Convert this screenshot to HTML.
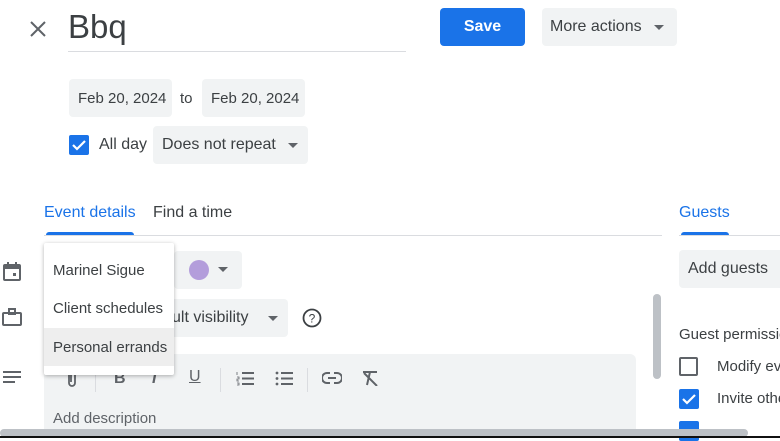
<!DOCTYPE html>
<html><head><style>
*{margin:0;padding:0;box-sizing:border-box}
body{width:780px;height:438px;overflow:hidden;background:#fff;font-family:"Liberation Sans",Arial,sans-serif;color:#3c4043;position:relative}
.a{position:absolute;white-space:nowrap}
.chip{position:absolute;background:#f1f3f4;border-radius:4px;font-size:15px;color:#3c4043;display:flex;align-items:center;white-space:nowrap;overflow:hidden}
.tri{width:0;height:0;border-left:5px solid transparent;border-right:5px solid transparent;border-top:5px solid #5f6368;position:absolute}
.cb{position:absolute;width:20px;height:20px;border-radius:2px;background:#1a73e8}
</style></head><body>
<svg class="a" style="left:29px;top:20px" width="18" height="18" viewBox="0 0 18 18"><path d="M2 2L16 16M16 2L2 16" stroke="#5f6368" stroke-width="2"/></svg>
<div class="a" style="left:68px;top:8px;font-size:33px;color:#3c4043">Bbq</div>
<div class="a" style="left:68px;top:51px;width:338px;height:1px;background:#dadce0"></div>
<div class="a" style="left:440px;top:8px;width:85px;height:38px;background:#1a73e8;border-radius:4px;color:#fff;font-size:16px;font-weight:bold;text-align:center;line-height:38px">Save</div>
<div class="chip" style="left:542px;top:8px;width:135px;height:38px;padding-left:8px;font-size:16px">More actions</div>
<div class="tri" style="left:654px;top:25px"></div>
<div class="chip" style="left:69px;top:79px;width:103px;height:38px;padding-left:9px">Feb 20, 2024</div>
<div class="a" style="left:180px;top:90px;font-size:15px">to</div>
<div class="chip" style="left:202px;top:79px;width:103px;height:38px;padding-left:9px">Feb 20, 2024</div>
<div class="cb" style="left:69px;top:135px"><svg width="20" height="20"><path d="M4 10l4 4 8-8" stroke="#fff" stroke-width="2.2" fill="none"/></svg></div>
<div class="a" style="left:99px;top:136px;font-size:16px">All day</div>
<div class="chip" style="left:153px;top:126px;width:155px;height:38px;padding-left:9px;font-size:16px">Does not repeat</div>
<div class="tri" style="left:288px;top:143px"></div>
<div class="a" style="left:44px;top:204px;font-size:16px;color:#1a73e8">Event details</div>
<div class="a" style="left:153px;top:204px;font-size:16px">Find a time</div>
<div class="a" style="left:46px;top:232px;width:88px;height:3px;background:#1a73e8;border-radius:3px 3px 0 0"></div>
<div class="a" style="left:44px;top:235px;width:618px;height:1px;background:#dadce0"></div>
<div class="a" style="left:679px;top:204px;font-size:16px;color:#1a73e8">Guests</div>
<div class="a" style="left:681px;top:232px;width:48px;height:3px;background:#1a73e8;border-radius:3px 3px 0 0"></div>
<div class="a" style="left:679px;top:235px;width:101px;height:1px;background:#dadce0"></div>
<div class="chip" style="left:679px;top:250px;width:110px;height:38px;padding-left:9px;font-size:16px">Add guests</div>
<div class="a" style="left:679px;top:326px;font-size:15px">Guest permissions</div>
<div class="a" style="left:679px;top:357px;width:19px;height:19px;border:2px solid #5f6368;border-radius:2px"></div>
<div class="a" style="left:717px;top:358px;font-size:15px">Modify event</div>
<div class="cb" style="left:679px;top:389px"><svg width="20" height="20"><path d="M4 10l4 4 8-8" stroke="#fff" stroke-width="2.2" fill="none"/></svg></div>
<div class="a" style="left:717px;top:390px;font-size:15px">Invite others</div>
<div class="cb" style="left:679px;top:421px"></div>
<div class="a" style="left:653px;top:294px;width:8px;height:85px;background:#bdc1c6;border-radius:4px"></div>
<svg class="a" style="left:3px;top:262px" width="18" height="19" viewBox="0 0 18 19"><rect x="1" y="3" width="16" height="15" rx="1" fill="none" stroke="#5f6368" stroke-width="2"/><rect x="1" y="3" width="16" height="4" fill="#5f6368"/><rect x="4" y="0" width="2" height="4" fill="#5f6368"/><rect x="12" y="0" width="2" height="4" fill="#5f6368"/><rect x="10" y="11" width="3" height="3" fill="#5f6368"/></svg>
<svg class="a" style="left:2px;top:308px" width="20" height="18" viewBox="0 0 20 18"><rect x="1" y="5" width="18" height="12" rx="1" fill="none" stroke="#5f6368" stroke-width="2"/><rect x="7" y="1" width="6" height="5" fill="none" stroke="#5f6368" stroke-width="2"/></svg>
<svg class="a" style="left:3px;top:371px" width="18" height="14"><path d="M0 1h18M0 6h18M0 11h12" stroke="#5f6368" stroke-width="2"/></svg>
<div class="chip" style="left:174px;top:251px;width:68px;height:38px"></div>
<div class="a" style="left:189px;top:260px;width:20px;height:20px;border-radius:50%;background:#b39ddb"></div>
<div class="tri" style="left:218px;top:267px"></div>
<div class="chip" style="left:150px;top:299px;width:138px;height:38px;padding-left:22px;font-size:16px">ult visibility</div>
<div class="tri" style="left:268px;top:316px"></div>
<svg class="a" style="left:302px;top:308px" width="20" height="20"><circle cx="10" cy="10" r="8.5" fill="none" stroke="#3c4043" stroke-width="1.8"/><text x="10" y="14.5" font-size="12" text-anchor="middle" fill="#3c4043" font-family="Liberation Sans">?</text></svg>
<div class="a" style="left:44px;top:354px;width:592px;height:84px;background:#f1f3f4;border-radius:6px 6px 0 0"></div>
<svg class="a" style="left:66px;top:369px" width="12" height="20"><path d="M3 5v9a3 3 0 0 0 6 0V4a2 2 0 0 0-4 0v9" stroke="#5f6368" stroke-width="1.8" fill="none"/></svg>
<div class="a" style="left:114px;top:370px;font-size:16px;font-weight:bold;color:#5f6368">B</div>
<div class="a" style="left:152px;top:370px;font-size:16px;font-weight:bold;font-style:italic;color:#5f6368">I</div>
<div class="a" style="left:95px;top:368px;width:1px;height:24px;background:#dadce0"></div>
<div class="a" style="left:220px;top:368px;width:1px;height:24px;background:#dadce0"></div>
<div class="a" style="left:307px;top:368px;width:1px;height:24px;background:#dadce0"></div>
<div class="a" style="left:189px;top:368px;font-size:16px;color:#5f6368;text-decoration:underline">U</div>
<svg class="a" style="left:236px;top:371px" width="18" height="15"><path d="M6 2h12M6 7.5h12M6 13h12" stroke="#5f6368" stroke-width="2"/><path d="M1 1v3M1 6h2v2H1v2h2M1 12h2v2H1" stroke="#5f6368" stroke-width="0.8" fill="none"/></svg>
<svg class="a" style="left:275px;top:371px" width="18" height="15"><path d="M6 2h12M6 7.5h12M6 13h12" stroke="#5f6368" stroke-width="2"/><circle cx="2" cy="2" r="1.4" fill="#5f6368"/><circle cx="2" cy="7.5" r="1.4" fill="#5f6368"/><circle cx="2" cy="13" r="1.4" fill="#5f6368"/></svg>
<svg class="a" style="left:322px;top:372px" width="20" height="12"><path d="M8 1H5a5 5 0 0 0 0 10h3M12 1h3a5 5 0 0 1 0 10h-3M6 6h8" stroke="#5f6368" stroke-width="2" fill="none"/></svg>
<svg class="a" style="left:361px;top:370px" width="18" height="16"><path d="M2 2h14M9 2L6 15M3 3l13 13" stroke="#5f6368" stroke-width="2" fill="none"/></svg>
<div class="a" style="left:53px;top:410px;font-size:15px;color:#5f6368">Add description</div>
<div class="a" style="left:44px;top:243px;width:130px;height:132px;background:#fff;box-shadow:0 1px 4px rgba(0,0,0,.3);border-radius:2px"></div>
<div class="a" style="left:44px;top:328px;width:130px;height:38px;background:#eeeeee"></div>
<div class="a" style="left:53px;top:262px;font-size:15px">Marinel Sigue</div>
<div class="a" style="left:53px;top:300px;font-size:15px">Client schedules</div>
<div class="a" style="left:53px;top:339px;font-size:15px">Personal errands</div>
<div class="a" style="left:0;top:429px;width:748px;height:8px;background:#bdc1c6;border-radius:4px"></div>
<div class="a" style="left:0;top:436px;width:780px;height:2px;background:#111"></div>
</body></html>
